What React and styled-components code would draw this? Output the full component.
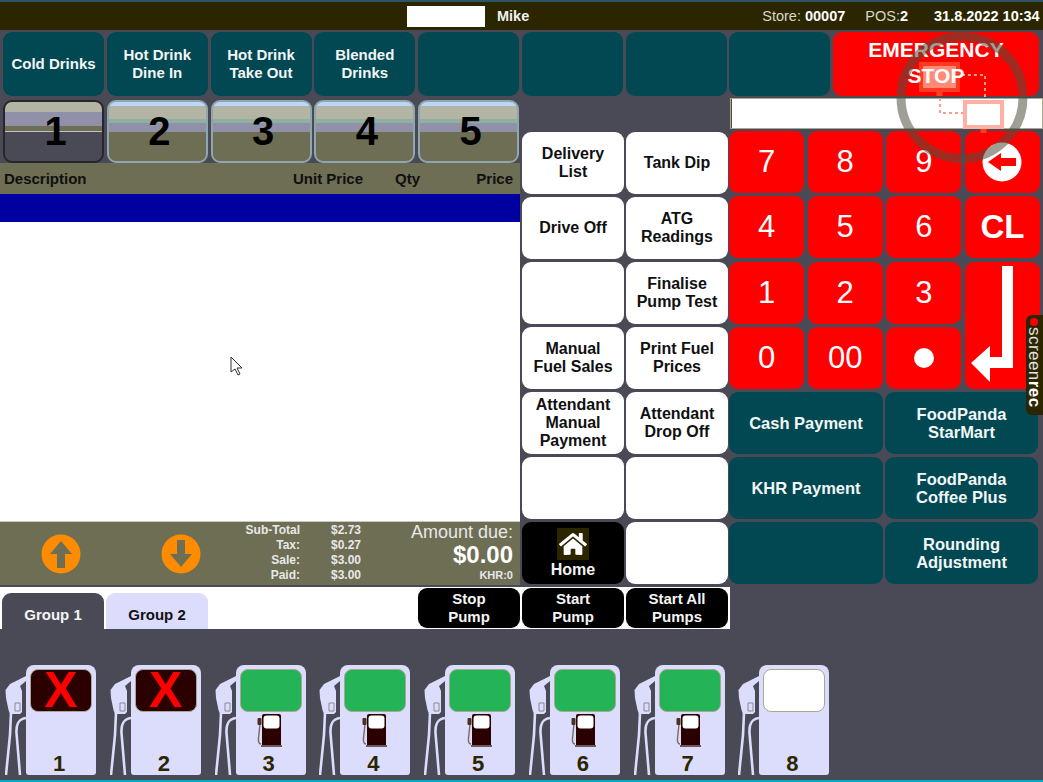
import React from 'react'
import styled, { createGlobalStyle } from 'styled-components'
import { FaHome } from 'react-icons/fa'

const GlobalStyle = createGlobalStyle`
  html, body { margin: 0; padding: 0; background: #4a4a56; }
  * { box-sizing: border-box; }
`

const Page = styled.div`
  position: relative;
  width: 1043px;
  height: 782px;
  overflow: hidden;
  background: #4a4a56;
  font-family: "Liberation Sans", Arial, sans-serif;
  display: flex;
  flex-direction: column;
`

const Header = styled.div`
  height: 30px;
  border-top: 2px solid #2c5566;
  background: #2b2600;
  display: flex;
  align-items: center;
  padding-left: 407px;
  font-size: 14.5px;
  color: #d8d8c8;
`
const NameBox = styled.div`
  width: 78px;
  height: 21px;
  background: #fff;
  margin-right: 12px;
`
const Name = styled.b`
  color: #f0f0f0;
`
const Info = styled.span`
  margin-left: ${p => p.$gap}px;
  b { color: #fff; }
`

const TopBar = styled.div`
  display: grid;
  grid-template-columns: repeat(8, 101px) 206px;
  grid-auto-rows: 64px;
  column-gap: 2.75px;
  padding: 2px 0 0 3px;
  height: 68px;
`
const Btn = styled.div`
  display: flex;
  align-items: center;
  justify-content: center;
  text-align: center;
  border-radius: 9px;
  font-weight: bold;
  font-size: 16px;
  line-height: 18px;
  white-space: pre-line;
`
const TealBtn = styled(Btn)`
  background: #014852;
  color: #f2f6f6;
  font-size: ${p => p.$size || 15}px;
`
const StopBtn = styled(Btn)`
  background: #ff0000;
  color: #fff;
  font-size: 21px;
  line-height: 26px;
  padding-bottom: 2px;
`
const StopLabel = styled.span`
  position: relative;
  z-index: 2;
`

const Main = styled.div`
  display: flex;
  height: 487px;
`
const LeftCol = styled.div`
  width: 520px;
  display: flex;
  flex-direction: column;
`
const TicketTabs = styled.div`
  display: grid;
  grid-template-columns: repeat(5, 101px);
  column-gap: 2.75px;
  padding: 2px 0 0 3px;
  height: 65px;
`
const TicketTab = styled.div`
  height: 63px;
  border-radius: 9px;
  border: 2px solid ${p => (p.$active ? '#26262c' : '#8ea6b0')};
  background: ${p => (p.$active
    ? 'linear-gradient(#b4b4a4 0 10px, #9090a8 10px 24px, #6e6e54 24px 29px, #c0c0c0 29px 30px, #4a4a56 30px)'
    : 'linear-gradient(#bcd6f6 0 4px, #b4b4a4 4px 17px, #8fb0a0 17px 21px, #9090a8 21px 30px, #6e6e54 30px)')};
  display: flex;
  align-items: center;
  justify-content: center;
  padding: 0 0 1px 4px;
  font-size: 40px;
  font-weight: bold;
  color: #000;
`
const Columns = styled.div`
  height: 31px;
  background: #6e6e54;
  display: grid;
  grid-template-columns: 288px 71px 57px 93px;
  align-items: center;
  padding-left: 4px;
  font-size: 15px;
  font-weight: bold;
  color: #101010;
`
const Column = styled.span`
  text-align: ${p => (p.$right ? 'right' : 'left')};
  white-space: nowrap;
`
const BlueRow = styled.div`
  height: 28px;
  background: #0000a0;
`
const TicketList = styled.div`
  flex: 1;
  background: #fff;
`
const Totals = styled.div`
  height: 64px;
  background: #6e6e54;
  border-top: 1px solid #c8c8c0;
  display: flex;
  align-items: center;
  color: #e8e8e8;
`
const ArrowWrap = styled.div`
  margin-left: ${p => p.$left}px;
  width: 40px;
  height: 40px;
`
const Figures = styled.div`
  margin-left: 19px;
  padding-bottom: 2px;
  display: grid;
  grid-template-columns: 80px 61px;
  font-size: 12px;
  font-weight: bold;
  line-height: 15px;
`
const FigLabel = styled.span`
  text-align: right;
`
const FigValue = styled.span`
  text-align: right;
`
const Due = styled.div`
  flex: 1;
  text-align: right;
  padding: 0 7px 4px 0;
`
const DueLabel = styled.div`
  font-size: 18px;
  line-height: 20px;
`
const DueValue = styled.div`
  font-size: 24px;
  font-weight: bold;
  line-height: 26px;
  color: #fff;
`
const DueKhr = styled.div`
  font-size: 11px;
  font-weight: bold;
  line-height: 14px;
`

const MidGrid = styled.div`
  margin: 34px 0 0 2px;
  width: 206px;
  display: grid;
  grid-template-columns: 102px 102px;
  grid-auto-rows: 62px;
  gap: 3px 2px;
`
const WhiteBtn = styled(Btn)`
  background: #fff;
  color: #101010;
`
const HomeBtn = styled(Btn)`
  background: #000;
  color: #f4f4f4;
  flex-direction: column;
`
const HomeIcon = styled.div`
  width: 32px;
  height: 32px;
  background: #2b2600;
  color: #fff;
  display: flex;
  align-items: center;
  justify-content: center;
  font-size: 28px;
  margin-bottom: 1px;
`

const RightCol = styled.div`
  margin-left: 1px;
  width: 314px;
  display: flex;
  flex-direction: column;
`
const Entry = styled.div`
  height: 31px;
  margin-left: 1px;
  background: #fff;
  border: 1px solid #a8a890;
  box-shadow: inset 1px 0 0 #50503c;
  flex-shrink: 0;
`
const Keypad = styled.div`
  margin-top: 2px;
  width: 311px;
  display: grid;
  grid-template-columns: repeat(4, 75px);
  grid-auto-rows: 62px;
  gap: 3.33px 3.67px;
`
const Key = styled(Btn)`
  background: #ff0000;
  color: #fff;
  font-size: ${p => (p.$big ? 33 : 31)}px;
  font-weight: ${p => (p.$big ? 'bold' : 'normal')};
  grid-row: ${p => p.$span || 'auto'};
`
const Dot = styled.div`
  width: 20px;
  height: 20px;
  border-radius: 50%;
  background: #fff;
`
const PayGrid = styled.div`
  margin-top: 3px;
  width: 309px;
  display: grid;
  grid-template-columns: 154px 153px;
  grid-auto-rows: 62px;
  gap: 3px 2px;
`

const GroupBar = styled.div`
  margin-top: 2px;
  width: 730px;
  height: 42px;
  background: #fff;
  display: flex;
  align-items: flex-end;
  padding-left: 2px;
`
const GroupTab = styled.div`
  width: 102px;
  height: 36px;
  margin-right: 2px;
  padding-top: 6px;
  border-radius: 9px 9px 0 0;
  background: ${p => (p.$active ? '#4a4a56' : '#dcdcfc')};
  color: ${p => (p.$active ? '#f4f4f4' : '#101010')};
  display: flex;
  align-items: center;
  justify-content: center;
  font-size: 15px;
  font-weight: bold;
`
const PumpActions = styled.div`
  margin-left: auto;
  height: 42px;
  padding: 1px 2px 1px 0;
  display: grid;
  grid-template-columns: repeat(3, 102px);
  column-gap: 2px;
`
const BlackBtn = styled(Btn)`
  background: #000;
  color: #f4f4f4;
  font-size: 15px;
`

const PumpRow = styled.div`
  display: flex;
  padding: 36px 0 0 5px;
  column-gap: 13.75px;
`
const Pump = styled.div`
  display: flex;
  align-items: stretch;
  height: 110px;
`
const PumpBody = styled.div`
  width: 70px;
  background: #dcdcfc;
  border-radius: 8px 8px 3px 3px;
  padding: 4px 4px 0;
  display: flex;
  flex-direction: column;
`
const PumpScreen = styled.div`
  height: 43px;
  flex-shrink: 0;
  border-radius: 8px;
  border: 1px solid #a8a890;
  background: ${p => ({ x: '#2a0000', on: '#24b457', off: '#fff' }[p.$state])};
  color: #ff0000;
  display: flex;
  align-items: center;
  justify-content: center;
  font-size: 50px;
  line-height: 41px;
  font-weight: bold;
`
const PumpIconSlot = styled.div`
  height: 33px;
  margin-top: 2px;
  padding-right: 3px;
  display: flex;
  justify-content: center;
`
const PumpNumber = styled.div`
  margin-top: auto;
  text-align: center;
  padding-right: 4px;
  font-size: 22px;
  line-height: 22px;
  font-weight: bold;
  color: #2b2600;
`

const BottomLine = styled.div`
  position: absolute;
  left: 0;
  right: 0;
  bottom: 0;
  height: 2px;
  background: #00a8c4;
`
const RecorderIcons = styled.svg`
  position: absolute;
  left: 890px;
  top: 30px;
  z-index: 1;
  pointer-events: none;
`
const RecorderRing = styled.svg`
  position: absolute;
  left: 890px;
  top: 30px;
  z-index: 3;
  pointer-events: none;
`
const Cursor = styled.svg`
  position: absolute;
  left: 230px;
  top: 356px;
`
const RecBadge = styled.div`
  position: absolute;
  left: 1026px;
  top: 315px;
  width: 17px;
  height: 100px;
  background: #2b2600;
  border-radius: 6px 0 0 6px;
  color: #e4e4e4;
  writing-mode: vertical-rl;
  font-size: 17px;
  letter-spacing: 0.45px;
  line-height: 17px;
  display: flex;
  align-items: center;
  padding-top: 12px;
  white-space: nowrap;
  b { font-weight: bold; color: #fff; }
`
const RecDot = styled.i`
  position: absolute;
  left: 4px;
  top: 3px;
  width: 8px;
  height: 8px;
  border-radius: 50%;
  background: #ff0000;
`

const Arrow = ({ down }) => (
  <svg width="40" height="40" viewBox="0 0 40 40">
    <circle cx="20" cy="20" r="19.5" fill="#ff8c00" />
    <path
      d={down
        ? 'M16 6h8v14h7L20 33 9 20h7z'
        : 'M16 34h8V20h7L20 7 9 20h7z'}
      fill="#6e6e54"
    />
  </svg>
)

const Backspace = () => (
  <svg width="40" height="40" viewBox="0 0 40 40">
    <circle cx="20" cy="20" r="19.5" fill="#fff" />
    <path d="M6 20 19 11v5h15v8H19v5z" fill="#ff0000" />
  </svg>
)

const EnterArrow = () => (
  <svg width="75" height="126" viewBox="0 0 75 126">
    <path d="M37 4h11v102H25v14L6 101 25 84v11h12z" fill="#fff" />
  </svg>
)

const Nozzle = () => (
  <svg width="21" height="110" viewBox="0 0 21 110">
    <path d="M21 11v5L15 21l2 5 0 12 0 9-2 2H5L3.500 45 1 33 0.500 25 5 19l4-2z" fill="#dcdcfc" />
    <path d="M10 38h5v8h-5z" fill="none" stroke="#8a8a90" strokeWidth="1" />
    <path d="M6 48 5 70 1 110" fill="none" stroke="#dcdcfc" strokeWidth="2.6" />
    <path d="M21 53C14 54 11 58 11.500 68L15 110" fill="none" stroke="#dcdcfc" strokeWidth="2.6" />
  </svg>
)

const FuelIcon = () => (
  <svg width="26" height="33" viewBox="0 0 26 33">
    <rect x="6" y="0" width="19" height="33" rx="2" fill="#2a0000" />
    <rect x="7.500" y="1.500" width="16" height="13" rx="3" fill="#fff" />
    <rect x="5" y="31" width="21" height="2" fill="#6a5a5a" />
    <path d="M4 10 2.500 24Q2 30 5 30" fill="none" stroke="#7a6a60" strokeWidth="1.4" />
    <rect x="1.500" y="4" width="4" height="7" rx="1" fill="#4a3020" />
  </svg>
)

const Monitor = ({ x, y, w, h, glass, edge }) => (
  <g>
    <rect x={x} y={y} width={w} height={h} fill={edge} />
    <rect x={x + 4} y={y + 4} width={w - 8} height={h - 8} fill={glass} />
    <rect x={x + w / 2 - 3} y={y + h} width="6" height="4" fill="#ff4020" />
  </g>
)

const categories = ['Cold Drinks', 'Hot Drink\nDine In', 'Hot Drink\nTake Out', 'Blended\nDrinks', '', '', '', '']

const functions = [
  'Delivery\nList', 'Tank Dip',
  'Drive Off', 'ATG\nReadings',
  '', 'Finalise\nPump Test',
  'Manual\nFuel Sales', 'Print Fuel\nPrices',
  'Attendant\nManual\nPayment', 'Attendant\nDrop Off',
  '', '',
]

const payments = ['Cash Payment', 'FoodPanda\nStarMart', 'KHR Payment', 'FoodPanda\nCoffee Plus', '', 'Rounding\nAdjustment']

const figures = [
  ['Sub-Total', '$2.73'],
  ['Tax:', '$0.27'],
  ['Sale:', '$3.00'],
  ['Paid:', '$3.00'],
]

const pumps = [
  { id: 1, state: 'x' },
  { id: 2, state: 'x' },
  { id: 3, state: 'on' },
  { id: 4, state: 'on' },
  { id: 5, state: 'on' },
  { id: 6, state: 'on' },
  { id: 7, state: 'on' },
  { id: 8, state: 'off' },
]

export default function App() {
  return (
    <Page>
      <GlobalStyle />
      <Header>
        <NameBox />
        <Name>Mike</Name>
        <Info $gap={233}>Store: <b>00007</b></Info>
        <Info $gap={20}>POS:<b>2</b></Info>
        <Info $gap={26}><b>31.8.2022 10:34</b></Info>
      </Header>

      <TopBar>
        {categories.map((c, i) => <TealBtn key={i}>{c}</TealBtn>)}
        <StopBtn><StopLabel>{'EMERGENCY\nSTOP'}</StopLabel></StopBtn>
      </TopBar>

      <Main>
        <LeftCol>
          <TicketTabs>
            {[1, 2, 3, 4, 5].map(n => <TicketTab key={n} $active={n === 1}>{n}</TicketTab>)}
          </TicketTabs>
          <Columns>
            <Column>Description</Column>
            <Column $right>Unit Price</Column>
            <Column $right>Qty</Column>
            <Column $right>Price</Column>
          </Columns>
          <BlueRow />
          <TicketList />
          <Totals>
            <ArrowWrap $left={41}><Arrow /></ArrowWrap>
            <ArrowWrap $left={80}><Arrow down /></ArrowWrap>
            <Figures>
              {figures.map(([label, value]) => (
                <React.Fragment key={label}>
                  <FigLabel>{label}</FigLabel>
                  <FigValue>{value}</FigValue>
                </React.Fragment>
              ))}
            </Figures>
            <Due>
              <DueLabel>Amount due:</DueLabel>
              <DueValue>$0.00</DueValue>
              <DueKhr>KHR:0</DueKhr>
            </Due>
          </Totals>
        </LeftCol>

        <MidGrid>
          {functions.map((f, i) => <WhiteBtn key={i}>{f}</WhiteBtn>)}
          <HomeBtn>
            <HomeIcon><FaHome /></HomeIcon>
            Home
          </HomeBtn>
          <WhiteBtn />
        </MidGrid>

        <RightCol>
          <Entry />
          <Keypad>
            <Key>7</Key><Key>8</Key><Key>9</Key><Key><Backspace /></Key>
            <Key>4</Key><Key>5</Key><Key>6</Key><Key $big>CL</Key>
            <Key>1</Key><Key>2</Key><Key>3</Key>
            <Key $span="span 2"><EnterArrow /></Key>
            <Key>0</Key><Key>00</Key><Key><Dot /></Key>
          </Keypad>
          <PayGrid>
            {payments.map((p, i) => <TealBtn key={i} $size={16.5}>{p}</TealBtn>)}
          </PayGrid>
        </RightCol>
      </Main>

      <GroupBar>
        <GroupTab $active>Group 1</GroupTab>
        <GroupTab>Group 2</GroupTab>
        <PumpActions>
          <BlackBtn>{'Stop\nPump'}</BlackBtn>
          <BlackBtn>{'Start\nPump'}</BlackBtn>
          <BlackBtn>{'Start All\nPumps'}</BlackBtn>
        </PumpActions>
      </GroupBar>

      <PumpRow>
        {pumps.map(p => (
          <Pump key={p.id}>
            <Nozzle />
            <PumpBody>
              <PumpScreen $state={p.state}>{p.state === 'x' ? 'X' : ''}</PumpScreen>
              {p.state === 'on' && <PumpIconSlot><FuelIcon /></PumpIconSlot>}
              <PumpNumber>{p.id}</PumpNumber>
            </PumpBody>
          </Pump>
        ))}
      </PumpRow>

      <BottomLine />

      <RecorderIcons width="140" height="140" viewBox="0 0 140 140">
        <Monitor x={29} y={32} w={41} h={30} edge="#ff3a20" glass="#ff8a78" />
        <Monitor x={73} y={70} w={41} h={29} edge="#ffb0a4" glass="#fff" />
        <path d="M50 68V83H73M72 45H95V70" fill="none" stroke="#ff9a8c" strokeWidth="2" strokeDasharray="3 3" />
      </RecorderIcons>
      <RecorderRing width="140" height="140" viewBox="0 0 140 140">
        <circle cx="72" cy="67.500" r="61" fill="none" stroke="#505040" strokeOpacity="0.55" strokeWidth="9" />
      </RecorderRing>

      <Cursor width="14" height="20" viewBox="0 0 14 20">
        <path d="M1 1v15l4-3 3 6 2-1-3-6h5z" fill="#fff" stroke="#303030" strokeWidth="1" />
      </Cursor>

      <RecBadge>
        <RecDot />
        <span>screen<b>rec</b></span>
      </RecBadge>
    </Page>
  )
}
